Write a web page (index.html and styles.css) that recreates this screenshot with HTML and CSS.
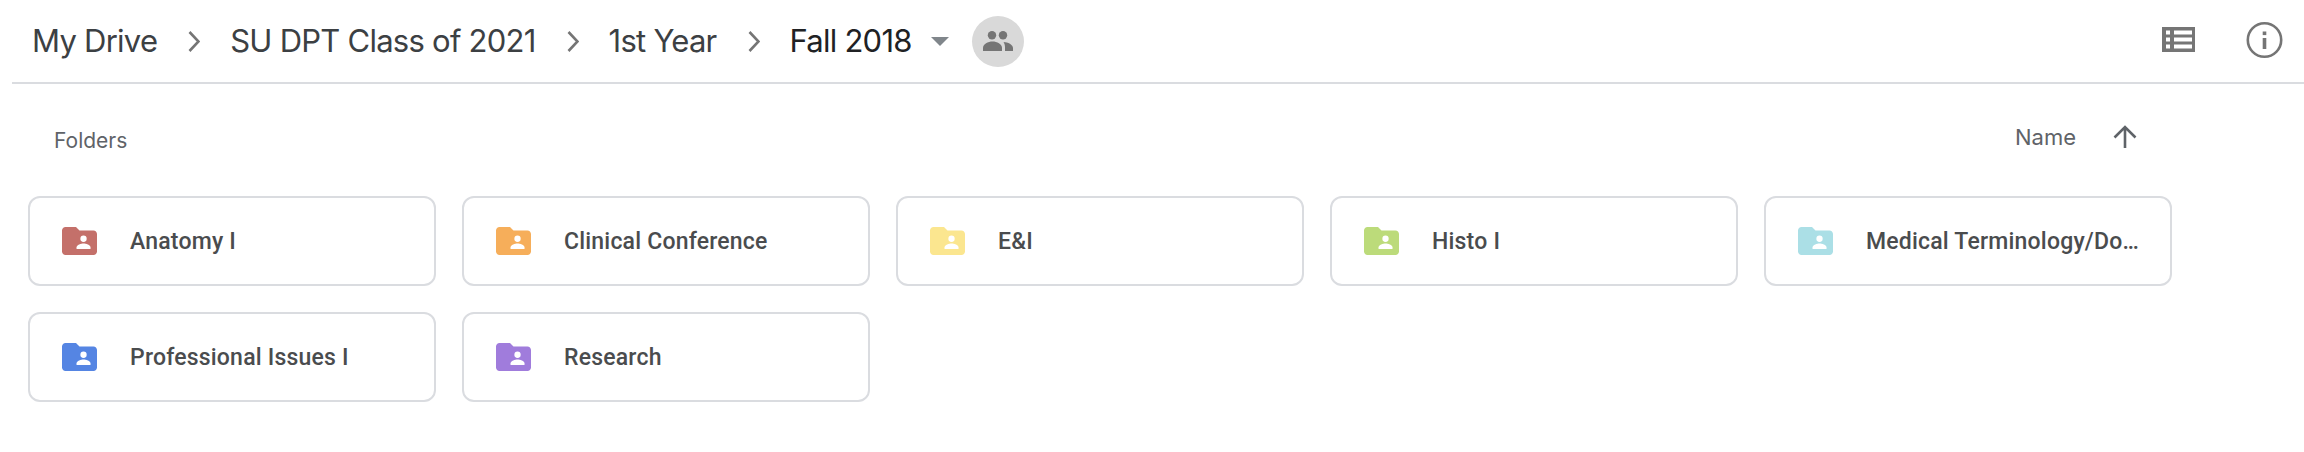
FILE: index.html
```html
<!DOCTYPE html>
<html lang="en">

    <head>
        <meta charset="UTF-8">
        <meta name="viewport" content="width=device-width, initial-scale=1.0">
        <title>Fall 2018 - Google Drive</title>
        <link rel="stylesheet" href="styles.css">
    </head>

    <body>
        <svg class="defs" width="0" height="0">
            <symbol id="folder" viewBox="0 0 20 16">
                <path d="M8 0H2C.9 0 0 .9 0 2v12c0 1.100.9 2 2 2h16c1.100 0 2-.9 2-2V4c0-1.100-.9-2-2-2h-8L8 0z" fill="currentColor"/>
                <circle cx="12.300" cy="6.700" r="1.800" fill="#fff"/>
                <path d="M8.300 12.500v-.8c0-1.500 2.700-2.300 4-2.300s4 .8 4 2.300v.8z" fill="#fff"/>
            </symbol>
        </svg>

        <header class="toolbar">
            <nav class="crumbs">
                <span class="crumb">My Drive</span>
                <svg class="chevron" viewBox="0 0 12 21"><path d="M1.500 1l9 9.500-9 9.500" fill="none" stroke="#757575" stroke-width="2.600"/></svg>
                <span class="crumb">SU DPT Class of 2021</span>
                <svg class="chevron" viewBox="0 0 12 21"><path d="M1.500 1l9 9.500-9 9.500" fill="none" stroke="#757575" stroke-width="2.600"/></svg>
                <span class="crumb">1st Year</span>
                <svg class="chevron" viewBox="0 0 12 21"><path d="M1.500 1l9 9.500-9 9.500" fill="none" stroke="#757575" stroke-width="2.600"/></svg>
                <span class="crumb current">Fall 2018</span>
                <span class="caret"></span>
                <span class="shared">
                    <svg viewBox="0 0 30 20" width="30" height="20">
                        <circle cx="9" cy="4.200" r="4.200" fill="#757575"/>
                        <circle cx="20" cy="4.200" r="4.200" fill="#757575"/>
                        <path d="M0 20v-3C0 13 5 10.500 9.500 10.500S19 13 19 17v3z" fill="#757575"/>
                        <path d="M20.500 11C25 11.300 30 13.500 30 17v3h-8v-3.500c0-2.200-.5-4-1.500-5.500z" fill="#757575"/>
                    </svg>
                </span>
            </nav>
            <div class="actions">
                <svg class="list-icon" viewBox="0 0 33 25" width="33" height="25">
                    <path fill-rule="evenodd" d="M0 0h33v25H0z M4 3.500v4h4v-4z M12 3.500v4h18v-4z M4 10.500v4h4v-4z M12 10.500v4h18v-4z M4 17.500v4h4v-4z M12 17.500v4h18v-4z" fill="#757575"/>
                </svg>
                <svg class="info-icon" viewBox="0 0 37 36" width="37" height="36">
                    <circle cx="18.500" cy="18" r="16.700" fill="none" stroke="#757575" stroke-width="2.600"/>
                    <rect x="16.700" y="16" width="3.600" height="11" fill="#757575"/>
                    <rect x="16.700" y="9.500" width="3.600" height="3.600" fill="#757575"/>
                </svg>
            </div>
        </header>

        <div class="section-head">
            <span class="section-title">Folders</span>
            <div class="sort">
                <span class="sort-label">Name</span>
                <svg viewBox="0 0 24 24" width="24" height="24"><path d="M12 23V4M1.500 12.500L12 2l10.500 10.500" fill="none" stroke="#5f6368" stroke-width="2.600"/></svg>
            </div>
        </div>

        <div class="folders">
            <div class="folder red"><svg class="folder-icon"><use href="#folder"/></svg><span class="folder-name">Anatomy I</span></div>
            <div class="folder orange"><svg class="folder-icon"><use href="#folder"/></svg><span class="folder-name">Clinical Conference</span></div>
            <div class="folder yellow"><svg class="folder-icon"><use href="#folder"/></svg><span class="folder-name">E&amp;I</span></div>
            <div class="folder green"><svg class="folder-icon"><use href="#folder"/></svg><span class="folder-name">Histo I</span></div>
            <div class="folder cyan"><svg class="folder-icon"><use href="#folder"/></svg><span class="folder-name">Medical Terminology/Do…</span></div>
            <div class="folder blue"><svg class="folder-icon"><use href="#folder"/></svg><span class="folder-name">Professional Issues I</span></div>
            <div class="folder purple"><svg class="folder-icon"><use href="#folder"/></svg><span class="folder-name">Research</span></div>
        </div>
    </body>

</html>
```

FILE: styles.css
```css
body {
    font-family: Roboto, Arial, sans-serif;
    background-color: #fff;
    margin: 0;
    height: 452px;
    overflow: hidden;
}

.defs {
    display: block;
    height: 0;
}

.toolbar {
    display: flex;
    justify-content: space-between;
    align-items: center;
    height: 82px;
    margin-left: 12px;
    padding: 0 21px 0 20px;
    border-bottom: 2px solid #dadce0;
}

.crumbs {
    display: flex;
    align-items: center;
}

.crumb {
    margin-bottom: 2px;
    font-family: Inter, Arial, sans-serif;
    font-size: 31px;
    letter-spacing: -0.75px;
    color: #3c4043;
}

.current {
    color: #202124;
}

.chevron {
    width: 12px;
    height: 21px;
    margin: 0 30px 0 31px;
}

.caret {
    width: 0;
    height: 0;
    margin: 0 23px 0 19px;
    border-left: 9px solid transparent;
    border-right: 9px solid transparent;
    border-top: 9px solid #80868b;
}

.shared {
    display: flex;
    justify-content: center;
    align-items: center;
    width: 52px;
    height: 51px;
    border-radius: 50%;
    background-color: #d9d9d9;
}

.actions {
    display: flex;
    align-items: center;
    gap: 51px;
    margin-bottom: 3px;
}

.section-head {
    display: flex;
    justify-content: space-between;
    align-items: center;
    height: 54px;
    margin-top: 29px;
    padding: 0 167px 0 54px;
}

.section-title {
    font-family: Inter, Arial, sans-serif;
    font-size: 21px;
    color: #5f6368;
}

.sort {
    display: flex;
    align-items: center;
    gap: 37px;
    margin-bottom: 6px;
}

.sort-label {
    font-family: Inter, Arial, sans-serif;
    font-size: 22px;
    color: #5f6368;
}

.folders {
    display: grid;
    grid-template-columns: repeat(5, 408px);
    column-gap: 26px;
    row-gap: 26px;
    margin-top: 29px;
    padding-left: 28px;
}

.folder {
    display: flex;
    align-items: center;
    box-sizing: border-box;
    height: 90px;
    padding: 0 22px 0 32px;
    border: 2px solid #dadce0;
    border-radius: 12px;
}

.folder-icon {
    flex: none;
    width: 35px;
    height: 28px;
    margin-right: 33px;
}

.folder-name {
    white-space: nowrap;
    font-size: 23px;
    font-weight: 500;
    letter-spacing: 0.2px;
    color: #4a4c4e;
}

.red { color: #c4706a; }
.orange { color: #f6ae5a; }
.yellow { color: #fbe68f; }
.green { color: #bcdb7a; }
.cyan { color: #abdfe6; }
.blue { color: #5585e3; }
.purple { color: #a07cdc; }
```
